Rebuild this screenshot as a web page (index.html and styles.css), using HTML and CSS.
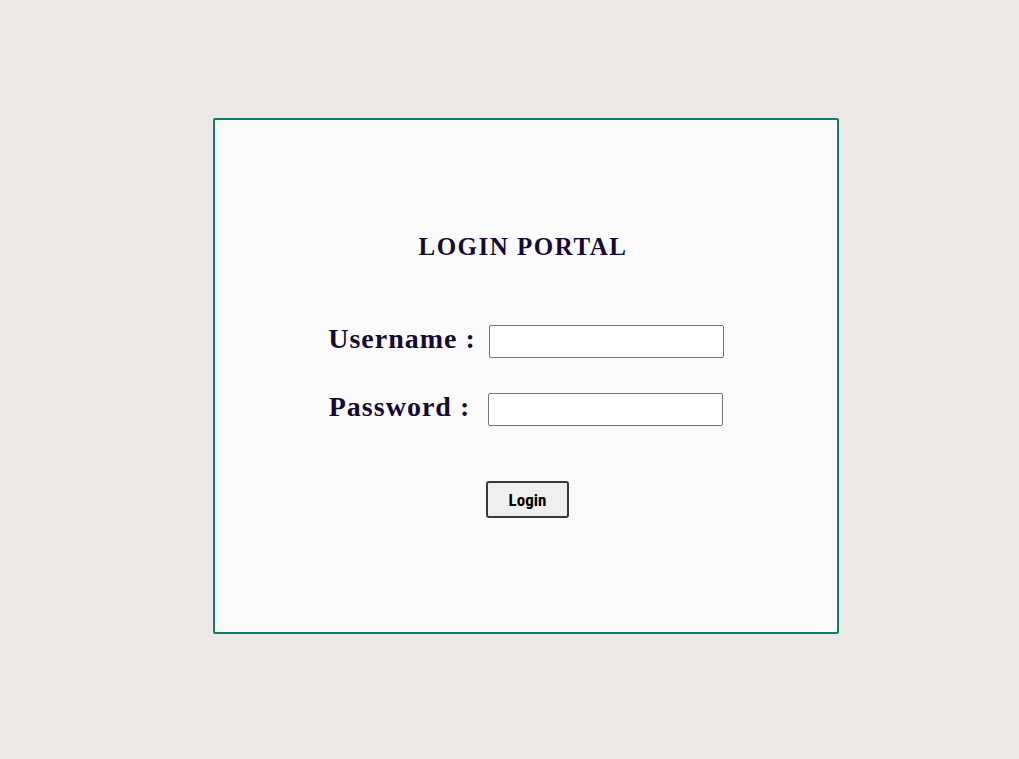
FILE: index.html
```html
<!DOCTYPE html>
<html>
<head>
<meta charset="utf-8">
<link rel="stylesheet" href="styles.css">
</head>
<body>
<div class="page">
  <div class="card">
    <h2 class="title">LOGIN PORTAL</h2>
    <form class="form">
      <div class="row">
        <label class="label user">Username :</label>
        <input class="field" type="text">
      </div>
      <div class="row">
        <label class="label pass">Password :</label>
        <input class="field" type="password">
      </div>
      <div class="actions">
        <button class="btn" type="button">Login</button>
      </div>
    </form>
  </div>
</div>
</body>
</html>
```
FILE: styles.css
```css
html, body {
  margin: 0;
  padding: 0;
  background: #ede9e7;
}
.page {
  padding-top: 118px;
  padding-left: 213px;
}
.card {
  box-sizing: border-box;
  width: 626px;
  height: 516px;
  border: 2px solid #0e7e6f;
  border-radius: 2px;
  background: #fbfbfb;
  display: flex;
  flex-direction: column;
  align-items: center;
}
.title {
  margin: 112px 0 0 0;
  font-family: "Liberation Serif", serif;
  font-weight: bold;
  font-size: 25px;
  letter-spacing: 1.5px;
  line-height: 30px;
  color: #150a35;
  transform: translateX(-3px);
}
.form {
  margin-top: 62px;
  display: flex;
  flex-direction: column;
  align-items: center;
}
.row {
  display: flex;
  align-items: center;
  height: 34px;
  margin-bottom: 34px;
}
.label {
  font-family: "Liberation Serif", serif;
  font-weight: bold;
  font-size: 28px;
  color: #150a35;
  letter-spacing: 1px;
  padding-bottom: 5px;
}
.label.user { margin-right: 13px; }
.label.pass { margin-right: 18px; }
.field {
  box-sizing: border-box;
  width: 235px;
  height: 33px;
  border: 1px solid #767676;
  border-radius: 2px;
  background: #fff;
  margin: 0;
}
.actions {
  margin-top: 21px;
  margin-left: 3px;
}
.btn {
  box-sizing: border-box;
  width: 83px;
  height: 37px;
  border: 2px solid #3a3a3a;
  border-radius: 3px;
  background: #efefef;
  font-family: "Liberation Sans Narrow", "Roboto Condensed", "Liberation Sans", sans-serif;
  font-weight: bold;
  font-size: 17px;
  color: #000;
  padding: 0;
}
```
